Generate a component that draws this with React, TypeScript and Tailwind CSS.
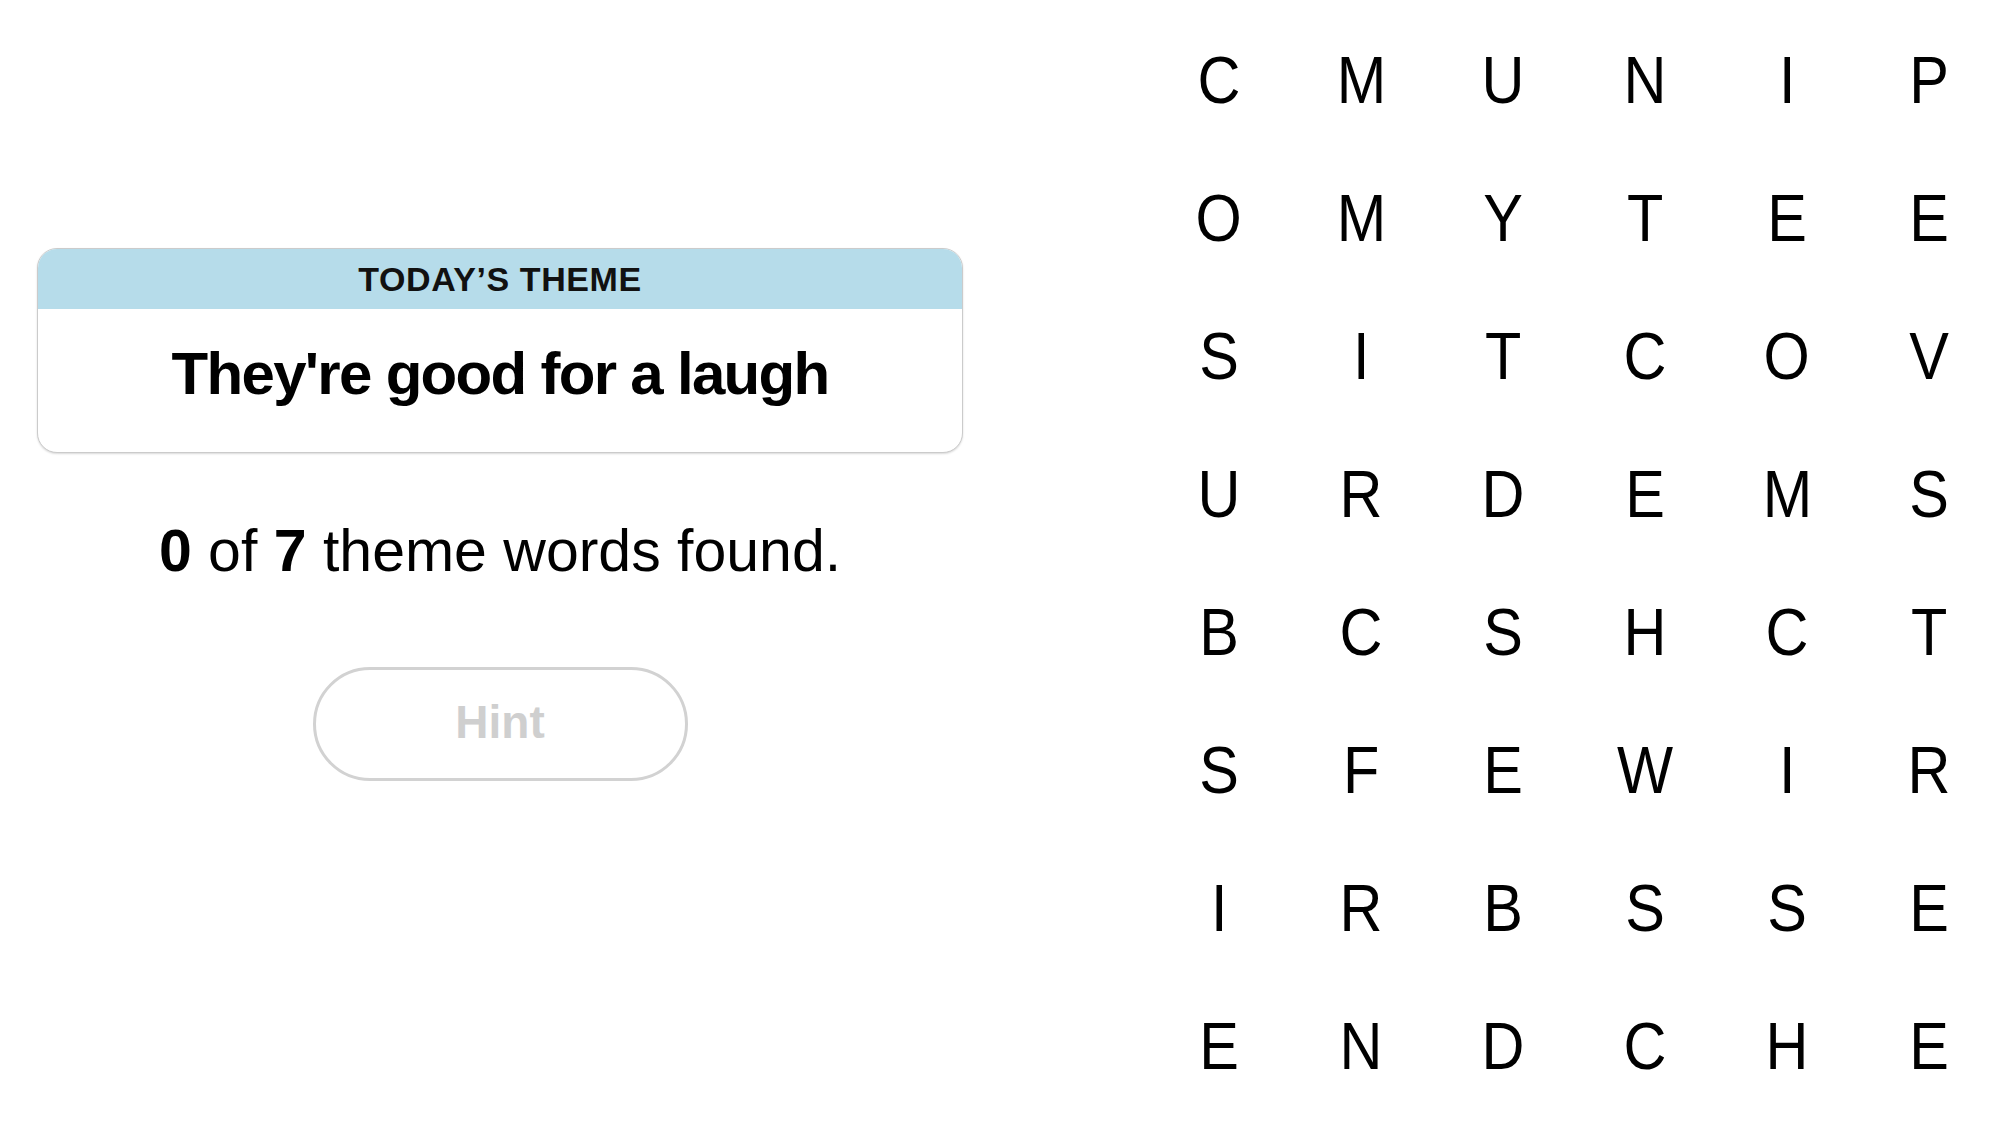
import React from 'react';

const rows = [
  'CMUNIP',
  'OMYTEE',
  'SITCOV',
  'URDEMS',
  'BCSHCT',
  'SFEWIR',
  'IRBSSE',
  'ENDCHE',
];

const ThemeCard: React.FC = () => (
  <div className="w-full rounded-[20px] border border-[#cbcbcb] overflow-hidden bg-white shadow-[0_1px_2px_rgba(0,0,0,0.15)]">
    <div className="h-[60px] bg-[#b6dcea] flex items-center justify-center">
      <span className="text-[34px] leading-none font-bold tracking-[0.6px] text-[#111]">TODAY’S THEME</span>
    </div>
    <div className="h-[143px] flex items-center justify-center pb-[13px]">
      <span className="text-[60px] leading-none font-bold tracking-[-1.7px] text-black">They're good for a laugh</span>
    </div>
  </div>
);

export default function App() {
  return (
    <div className="w-[2000px] h-[1125px] bg-white flex font-['Liberation_Sans',Arial,sans-serif] text-black overflow-hidden">
      <div className="w-[1000px] shrink-0 flex flex-col items-center pt-[248px] px-[37px]">
        <ThemeCard />
        <p className="mt-[69px] text-[59px] leading-none">
          <b>0</b> of <b>7</b> theme words found.
        </p>
        <button className="mt-[86px] w-[375px] h-[114px] rounded-full border-[3px] border-[#d2d2d2] bg-white flex items-center justify-center">
          <span className="text-[46px] leading-none font-bold text-[#cfcfcf] -mt-[4px]">Hint</span>
        </button>
      </div>
      <div className="ml-[148px] pt-[11px] grid grid-cols-[repeat(6,142px)] auto-rows-[138px]">
        {rows.map((row, r) =>
          row.split('').map((ch, c) => (
            <div key={`${r}-${c}`} className="flex items-center justify-center text-[66px] leading-none">
              <span className="scale-x-[0.9]">{ch}</span>
            </div>
          ))
        )}
      </div>
    </div>
  );
}
